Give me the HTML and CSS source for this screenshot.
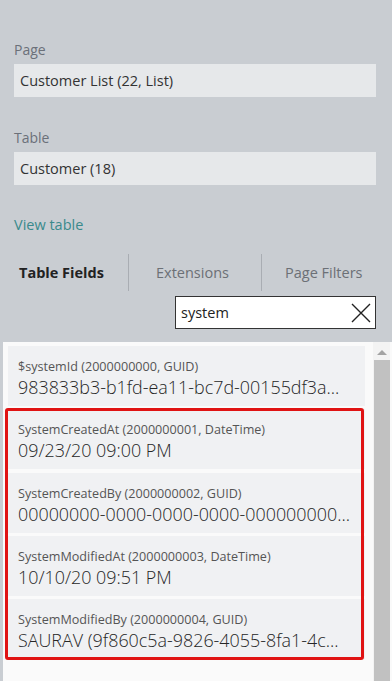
FILE: index.html
```html
<!DOCTYPE html>
<html lang="en">
<head>
  <meta charset="UTF-8">
  <meta name="viewport" content="width=device-width, initial-scale=1.0">
  <title>Page Inspection</title>
  <link rel="stylesheet" href="styles.css">
</head>
<body>
  <div class="info">
    <div class="label">Page</div>
    <div class="field">Customer List (22, List)</div>

    <div class="label label-table">Table</div>
    <div class="field">Customer (18)</div>

    <a class="view-link" href="#">View table</a>

    <!-- Tabs -->
    <div class="tabs">
      <div class="tab tab-fields active">Table Fields</div>
      <div class="tab tab-ext">Extensions</div>
      <div class="tab tab-filters">Page Filters</div>
    </div>

    <div class="search-row">
      <div class="search">
        <span class="search-text">system</span>
        <svg class="clear" width="22" height="22" viewBox="0 0 22 22">
          <path d="M2 2 L20 20 M20 2 L2 20" stroke="#222" stroke-width="1.4" fill="none"/>
        </svg>
      </div>
    </div>
  </div>

  <!-- Field list -->
  <div class="panel">
    <div class="list">
      <div class="card">
        <div class="card-label">$systemId (2000000000, GUID)</div>
        <div class="card-value">983833b3-b1fd-ea11-bc7d-00155df3a...</div>
      </div>
      <div class="card">
        <div class="card-label">SystemCreatedAt (2000000001, DateTime)</div>
        <div class="card-value">09/23/20 09:00 PM</div>
      </div>
      <div class="card">
        <div class="card-label">SystemCreatedBy (2000000002, GUID)</div>
        <div class="card-value">00000000-0000-0000-0000-000000000...</div>
      </div>
      <div class="card">
        <div class="card-label">SystemModifiedAt (2000000003, DateTime)</div>
        <div class="card-value">10/10/20 09:51 PM</div>
      </div>
      <div class="card">
        <div class="card-label">SystemModifiedBy (2000000004, GUID)</div>
        <div class="card-value">SAURAV (9f860c5a-9826-4055-8fa1-4c...</div>
      </div>
      <div class="highlight"></div>
    </div>
    <div class="scrollbar">
      <div class="arrow"></div>
      <div class="thumb"></div>
    </div>
  </div>
</body>
</html>
```

FILE: styles.css
```css
body {
  margin: 0;
  height: 681px;
  overflow: hidden;
  background: #c9cdd2;
  font-family: 'Open Sans', sans-serif;
  color: #333;
  display: flex;
  flex-direction: column;
}

.info {
  padding: 40px 16px 0 14px;
}

.label {
  font-size: 14px;
  line-height: 20px;
  color: #6b7079;
  margin-bottom: 4px;
}
.label-table {
  margin-top: 31px;
}

.field {
  height: 33px;
  line-height: 33px;
  padding: 0 6px;
  background: #e6e8ea;
  font-size: 14.5px;
  color: #333;
}

.view-link {
  display: block;
  margin-top: 30px;
  font-size: 14.5px;
  line-height: 20px;
  color: #3a8a8c;
  text-decoration: none;
}

/* Tabs */
.tabs {
  display: flex;
  margin-top: 19px;
  height: 37px;
}
.tab {
  display: flex;
  align-items: center;
  font-size: 14.5px;
  color: #6c7076;
}
.tab-fields {
  width: 115px;
  padding-left: 5px;
  box-sizing: border-box;
  border-right: 1px solid #a9adb3;
}
.tab-ext {
  width: 133px;
  padding-left: 27px;
  box-sizing: border-box;
  border-right: 1px solid #a9adb3;
}
.tab-filters {
  flex: 1;
  padding-left: 23px;
}
.tab.active {
  font-weight: bold;
  color: #222;
}

.search-row {
  display: flex;
  justify-content: flex-end;
  margin-top: 5px;
}
.search {
  width: 201px;
  height: 33px;
  box-sizing: border-box;
  border: 1px solid #333;
  background: #fff;
  display: flex;
  align-items: center;
  justify-content: space-between;
  padding: 0 3px 0 5px;
}
.search-text {
  font-size: 14.5px;
  color: #222;
}

/* List panel */
.panel {
  flex: 1;
  margin-top: 13px;
  margin-left: 3px;
  background: #fafafa;
  display: flex;
}
.list {
  position: relative;
  width: 357px;
  margin-left: 5px;
  padding-top: 4px;
  display: flex;
  flex-direction: column;
  gap: 3.3px;
}
.card {
  background: #f0f1f3;
  padding: 12px 10px 6px;
  height: 60px;
  box-sizing: border-box;
}
.card-label {
  font-size: 12.6px;
  line-height: 18px;
  color: #555;
  white-space: nowrap;
}
.card-value {
  font-size: 17.9px;
  font-weight: 300;
  line-height: 23px;
  color: #262626;
  white-space: nowrap;
}

.highlight {
  position: absolute;
  left: -3px;
  top: 66px;
  width: 359px;
  height: 252px;
  box-sizing: border-box;
  border: 3px solid #e01313;
  border-radius: 3px;
}

.scrollbar {
  margin-left: 8px;
  width: 17px;
  background: #f3f3f3;
  display: flex;
  flex-direction: column;
  align-items: center;
}
.arrow {
  margin: 8px 0 5px;
  width: 0;
  height: 0;
  border-left: 5px solid transparent;
  border-right: 5px solid transparent;
  border-bottom: 5px solid #a3a3a3;
}
.thumb {
  flex: 1;
  width: 16px;
  background: #c1c1c1;
}
```
